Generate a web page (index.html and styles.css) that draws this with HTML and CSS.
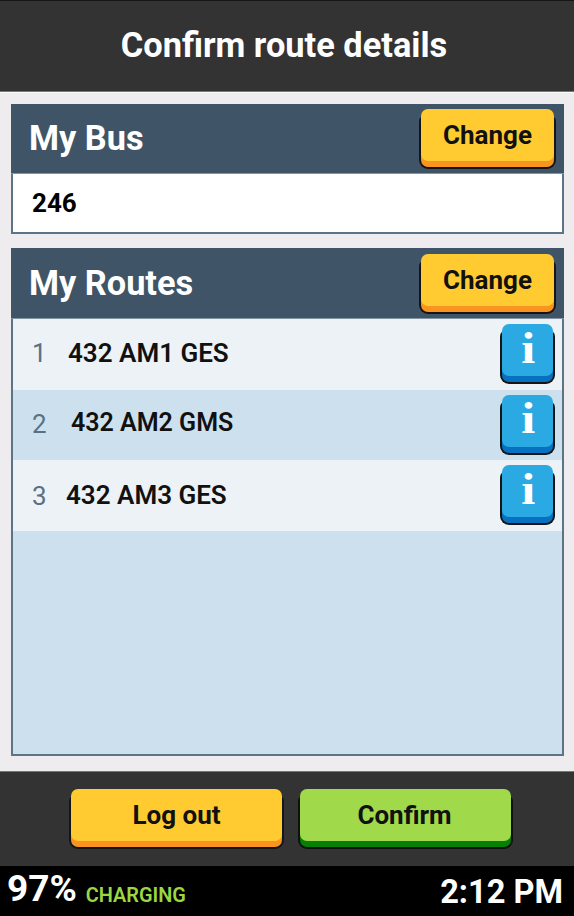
FILE: index.html
```html
<!DOCTYPE html>
<html lang="en">
<head>
<meta charset="utf-8">
<title>Confirm route details</title>
<link rel="stylesheet" href="styles.css">
</head>
<body>
<div class="app">
  <header class="title-bar"><h1>Confirm route details</h1></header>
  <main class="content">
    <section class="panel">
      <div class="panel-head"><h2 class="bus-title">My Bus</h2><button class="btn yellow change">Change</button></div>
      <div class="bus">246</div>
    </section>
    <section class="panel routes">
      <div class="panel-head"><h2 class="routes-title">My Routes</h2><button class="btn yellow change">Change</button></div>
      <ol class="list">
        <li class="row first"><span class="num">1</span><span class="name">432 AM1 GES</span><button class="btn info"><span class="glyph">i</span></button></li>
        <li class="row second"><span class="num">2</span><span class="name">432 AM2 GMS</span><button class="btn info"><span class="glyph">i</span></button></li>
        <li class="row third"><span class="num">3</span><span class="name">432 AM3 GES</span><button class="btn info"><span class="glyph">i</span></button></li>
      </ol>
    </section>
  </main>
  <footer class="actions">
    <button class="btn yellow wide logout">Log out</button>
    <button class="btn green wide confirm">Confirm</button>
  </footer>
  <div class="status">
    <span class="battery">97%</span>
    <span class="charging">CHARGING</span>
    <span class="time">2:12 PM</span>
  </div>
</div>
</body>
</html>
```
FILE: styles.css
```css
* { box-sizing: border-box; }
body { margin: 0; font-family: Roboto, "Liberation Sans", sans-serif; }
h1, h2, ol { margin: 0; padding: 0; }
.app { width: 574px; height: 916px; display: flex; flex-direction: column; background: #eeecee; }
.title-bar { height: 92px; background: #333; border-top: 1px solid #151515; border-bottom: 1px solid #777; display: flex; justify-content: center; }
h1 { color: #fff; font-size: 34.4px; line-height: 40px; font-weight: 700; padding-top: 24px; margin-right: 6px; white-space: nowrap; }
.content { height: 679px; padding: 11px 10px 0 11px; display: flex; flex-direction: column; gap: 14px; border-top: 1px solid #fafafa; }
.panel { height: 130px; border: 2px solid #5c7485; background: #fff; flex: none; }
.routes { height: 508px; background: #cde0ed; }
.panel-head { height: 70px; margin: -2px -2px 0; padding: 5px 10px 0 18px; background: #3f5567; border-bottom: 1px solid #8495a2; display: flex; justify-content: space-between; align-items: flex-start; }
h2 { color: #fff; font-size: 34.3px; line-height: 40px; font-weight: 700; padding-top: 9px; white-space: nowrap; }
.routes .panel-head { height: 71px; }
.routes-title { padding-top: 10px; }
.btn { border: 0; padding: 0; display: block; flex: none; font: 700 26px/50px Roboto, sans-serif; color: #111; height: 52px; border-radius: 7px; text-align: center; white-space: nowrap; }
.yellow { background: #ffcb31; box-shadow: 0 6px 0 #fa9420, 0 6px 0 2px #151515; }
.green { background: #a0d94a; box-shadow: 0 6px 0 #058005, 0 6px 0 2px #101010; }
.change { width: 133px; }
.routes .change { margin-top: 1px; line-height: 49px; }
.bus { font-size: 26px; line-height: 30px; font-weight: 700; color: #000; padding: 14px 0 0 19px; }
.list { list-style: none; }
.row { height: 70.5px; display: flex; align-items: flex-start; padding: 5px 9px 0 19px; background: #edf2f6; }
.row.second { background: #cde0ed; }
.num { width: 36px; font-size: 26px; line-height: 30px; color: #587183; padding-top: 14px; }
.name { flex: 1; font-size: 26px; line-height: 30px; font-weight: 600; color: #111; padding-top: 14px; white-space: nowrap; }
.second .name { font-size: 25px; margin-left: 3px; margin-right: -3px; padding-top: 13px; }
.third .name { margin-left: -2px; padding-top: 15px; }
.third .num { padding-top: 16px; }
.info { width: 51px; height: 52px; background: #2aa9e2; box-shadow: 0 6px 0 #0870c0, 0 6px 0 2px #151515; color: #fff; font: 700 45px/46px "Liberation Serif", serif; padding: 0 0 5px 1px; }
.glyph { display: inline-block; transform: scaleX(1.12); }
.actions { height: 95px; background: #333; border-top: 1px solid #777; padding: 17px 0 0 71px; display: flex; gap: 18px; }
.actions .btn { line-height: 51px; }
.wide { width: 211px; }
.confirm { padding-right: 2px; }
.status { height: 50px; background: #000; display: flex; align-items: baseline; padding: 1px 11px 0 7px; }
.battery { color: #fff; font-size: 37px; line-height: 44px; font-weight: 700; }
.charging { color: #9bd740; font-size: 19.9px; font-weight: 600; margin-left: 9px; position: relative; top: 1px; }
.time { color: #fff; font-size: 32.6px; font-weight: 700; margin-left: auto; position: relative; top: 2px; }
```
